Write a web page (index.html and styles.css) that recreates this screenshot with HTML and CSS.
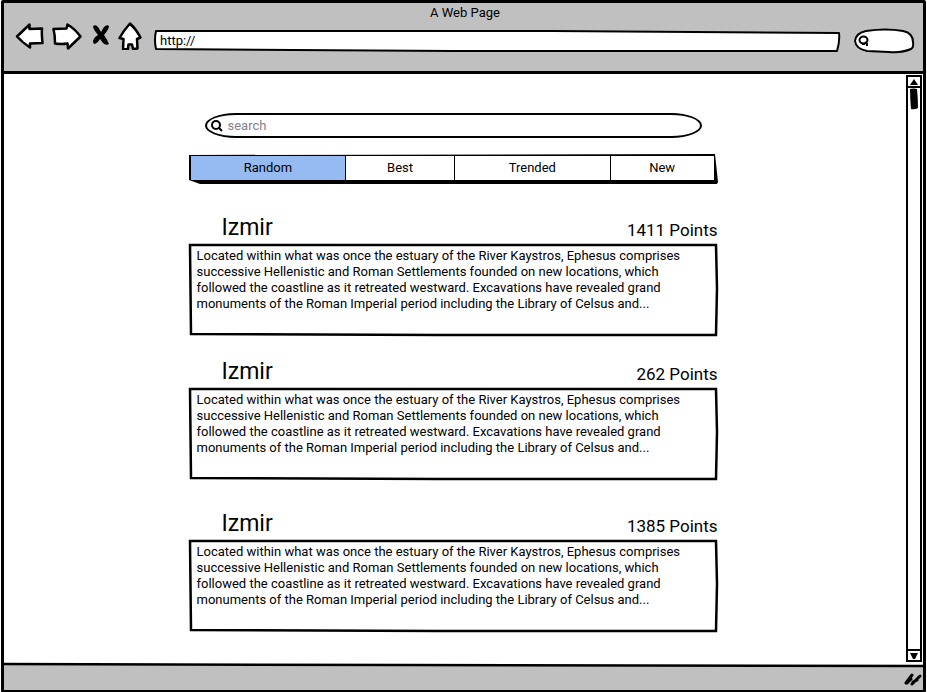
FILE: index.html
```html
<!DOCTYPE html>
<html lang="en">
<head>
<meta charset="utf-8">
<meta name="viewport" content="width=device-width, initial-scale=1">
<title>A Web Page</title>
<link rel="stylesheet" href="styles.css">
</head>
<body>
<div class="window">
  <header class="chrome">
    <h1 class="window-title">A Web Page</h1>
    <div class="toolbar">
      <button class="tool" type="button" aria-label="Back">
        <svg width="29" height="28" viewBox="0 0 29 28"><path class="shape" d="M2 14.5 14.5 2.5V7L27 6.500C26.500 12 27 16 27.500 21L15 21.500V25.500Q8 21 2 14.500Z"/></svg>
      </button>
      <button class="tool" type="button" aria-label="Forward">
        <svg width="30" height="28" viewBox="0 0 30 28"><path class="shape" d="M1.500 7 14.500 6.500 15.500 2.500Q23 7 28.500 14.500L16 26.500 15.500 21.500Q9 22.500 3 21.500Q3 13 1.500 7Z"/></svg>
      </button>
      <button class="tool stop" type="button" aria-label="Stop">
        <svg width="18" height="28" viewBox="0 0 18 28"><path d="M1 4Q4 2 6 5L9 10 12 5Q15 2 17 4Q17 7 12 13Q15 17 17 22Q14 24 11 21L8 17Q6 21 3 22Q1 22 1 19Q2 15 6 13Q1 7 1 4Z"/></svg>
      </button>
      <button class="tool" type="button" aria-label="Home">
        <svg width="24" height="28" viewBox="0 0 24 28"><path class="shape" d="M12 1.500Q18 7 22.500 15.500L19 17 19.500 26.500 15 27 14 22.500H10.500L10 27 5 27.500 5.500 17 1.500 16Q6 8 12 1.500Z"/></svg>
      </button>
      <div class="address">
        <svg class="outline" viewBox="0 0 688 24" preserveAspectRatio="none" aria-hidden="true"><path class="shape thin" d="M3 2 400 2 687 4Q688 12 685 22L300 22 3 20Q1 11 3 2Z"/></svg>
        <input class="address-input" type="text" value="http://" aria-label="Address">
      </div>
      <div class="quick">
        <svg class="outline" viewBox="0 0 61 26" preserveAspectRatio="none" aria-hidden="true"><path class="shape thin" d="M12 3Q32 0 49 3Q59 5 59 14Q60 19 57 21Q48 25 35 24L13 23Q2 21 1 13Q2 5 12 3Z"/></svg>
        <svg class="lens" width="12" height="12" viewBox="0 0 12 12" aria-hidden="true"><ellipse class="line" cx="5.500" cy="5" rx="4" ry="3.500"/><path class="line" d="M4 9H7M7 7 9 9V11"/></svg>
        <input class="quick-input" type="text" aria-label="Web search">
      </div>
    </div>
  </header>

  <div class="viewport">
    <main class="content">
      <label class="search">
        <svg width="12" height="13" viewBox="0 0 12 13" aria-hidden="true"><circle class="line" cx="5" cy="6" r="4"/><path class="line" d="M8 9 11 12"/></svg>
        <input class="search-input" type="text" placeholder="search" aria-label="search">
      </label>

      <nav class="tabs">
        <svg class="outline" viewBox="0 0 528 30" preserveAspectRatio="none" aria-hidden="true"><path d="M0 1 525 0 528 28 527 30H11L0 26Z"/></svg>
        <button class="tab active" type="button">Random</button>
        <button class="tab" type="button">Best</button>
        <button class="tab" type="button">Trended</button>
        <button class="tab" type="button">New</button>
      </nav>

      <article class="entry">
        <div class="entry-head"><h2 class="entry-title">Izmir</h2><span class="points">1411 Points</span></div>
        <div class="card">
          <svg class="outline" viewBox="0 0 529 94" preserveAspectRatio="none" aria-hidden="true"><path class="shape edge" d="M1 2 527 2 528 45 527 92 250 92 2 91Z"/></svg>
          <p class="text">Located within what was once the estuary of the River Kaystros, Ephesus comprises<br>successive Hellenistic and Roman Settlements founded on new locations, which<br>followed the coastline as it retreated westward. Excavations have revealed grand<br>monuments of the Roman Imperial period including the Library of Celsus and...</p>
        </div>
      </article>

      <article class="entry">
        <div class="entry-head"><h2 class="entry-title">Izmir</h2><span class="points">262 Points</span></div>
        <div class="card">
          <svg class="outline" viewBox="0 0 529 94" preserveAspectRatio="none" aria-hidden="true"><path class="shape edge" d="M1 2 527 2 528 45 527 92 250 92 2 91Z"/></svg>
          <p class="text">Located within what was once the estuary of the River Kaystros, Ephesus comprises<br>successive Hellenistic and Roman Settlements founded on new locations, which<br>followed the coastline as it retreated westward. Excavations have revealed grand<br>monuments of the Roman Imperial period including the Library of Celsus and...</p>
        </div>
      </article>

      <article class="entry spaced">
        <div class="entry-head"><h2 class="entry-title">Izmir</h2><span class="points">1385 Points</span></div>
        <div class="card">
          <svg class="outline" viewBox="0 0 529 94" preserveAspectRatio="none" aria-hidden="true"><path class="shape edge" d="M1 2 527 2 528 45 527 92 250 92 2 91Z"/></svg>
          <p class="text">Located within what was once the estuary of the River Kaystros, Ephesus comprises<br>successive Hellenistic and Roman Settlements founded on new locations, which<br>followed the coastline as it retreated westward. Excavations have revealed grand<br>monuments of the Roman Imperial period including the Library of Celsus and...</p>
        </div>
      </article>
    </main>

    <div class="scrollbar">
      <button class="scroll-button" type="button" aria-label="Scroll up"><svg width="8" height="6" viewBox="0 0 8 6"><path d="M0 6 4 0 8 6Z"/></svg></button>
      <div class="track"><svg width="8" height="22" viewBox="0 0 8 22" aria-hidden="true"><path d="M0 1Q4 0 7 1Q8 11 8 20Q5 22 1 21Q0 10 0 1Z"/></svg></div>
      <button class="scroll-button" type="button" aria-label="Scroll down"><svg width="8" height="6" viewBox="0 0 8 6"><path d="M0 0H8L5 6H3Z"/></svg></button>
    </div>
  </div>

  <footer class="status">
    <svg class="rule" viewBox="0 0 920 6" preserveAspectRatio="none" aria-hidden="true"><path class="paper" d="M0 0H920V3L0 1Z"/><path class="shape edge" d="M0 1 400 2 920 3"/></svg>
    <svg class="grip" width="18" height="14" viewBox="0 0 18 14" aria-hidden="true"><path class="stroke" d="M2 11 8 3M8 12 16 4M3 11 7 7M9 10 13 8"/></svg>
  </footer>
</div>
</body>
</html>
```
FILE: styles.css
```css
* { box-sizing: border-box; }

body {
  margin: 0;
  background: #fff;
  color: #000;
  font-family: Roboto, "Open Sans", sans-serif;
  font-size: 13px;
  line-height: 16px;
}

button, input {
  margin: 0;
  padding: 0;
  border: 0;
  background: none;
  color: inherit;
  font: inherit;
}

input:focus { outline: none; }
svg { display: block; }

.shape { fill: #fff; stroke: #000; stroke-width: 2.500; stroke-linejoin: round; }
.thin, .edge { stroke-width: 2; vector-effect: non-scaling-stroke; }
.edge { stroke-width: 2.500; stroke-linejoin: miter; }
.line { fill: none; stroke: #000; stroke-width: 2; }
.stroke { fill: none; stroke: #000; stroke-width: 3; stroke-linecap: round; }
.paper { fill: #fff; }

.outline {
  position: absolute;
  inset: 0;
  width: 100%;
  height: 100%;
  overflow: visible;
}

.window {
  display: flex;
  flex-direction: column;
  min-height: calc(100vh - 1px);
  margin: 0 1px 1px;
  border: 3px solid #000;
  border-radius: 2px;
}

.chrome {
  padding: 1px 8px 21px 11px;
  border-bottom: 3px solid #000;
  background: #c0c0c0;
}

.window-title {
  margin: 0;
  font-size: 13px;
  font-weight: 400;
  line-height: 18px;
  text-align: center;
}

.toolbar {
  display: flex;
  align-items: center;
  height: 28px;
}

.tool { flex: none; margin-right: 8px; }
.stop { margin-left: 2px; }

.address { position: relative; flex: 1; height: 24px; margin: 10px 14px 0 3px; }
.address-input { position: relative; width: 100%; height: 22px; padding: 0 7px; }

.quick {
  position: relative;
  display: flex;
  flex: none;
  align-items: center;
  width: 61px;
  height: 26px;
  margin-top: 10px;
  padding: 0 8px 0 4px;
}
.lens { position: relative; flex: none; }
.quick-input { position: relative; width: 100%; min-width: 0; height: 20px; }

.viewport { display: flex; flex: 1; padding-right: 1px; }

.content {
  flex: 1;
  width: 100%;
  max-width: 529px;
  margin: 0 auto;
  padding: 39px 0 30px;
}

.search {
  display: flex;
  align-items: center;
  gap: 5px;
  height: 25px;
  margin: 0 16px;
  padding: 0 4px;
  border: 2px solid #000;
  border-radius: 32px / 13px;
}
.search-input { flex: 1; min-width: 0; }
.search-input::placeholder { color: #87808a; opacity: 1; }

.tabs {
  position: relative;
  display: grid;
  grid-template-columns: 155fr 108fr 155fr 103fr;
  gap: 1px;
  height: 30px;
  margin: 16px 0 28px;
  padding: 2px 4px 4px 2px;
}
.tab { position: relative; background: #fff; }
.active { background: #95bbf2; }

.entry { margin-bottom: 19px; }
.spaced { margin-top: 27px; margin-bottom: 0; }

.entry-head {
  display: flex;
  align-items: flex-end;
  justify-content: space-between;
  padding-left: 33px;
}
.entry-title { margin: 0; font-size: 23px; font-weight: 400; line-height: 31px; }
.points { font-size: 17px; line-height: 26px; }

.card { position: relative; min-height: 94px; padding: 5px 8px; }
.text { position: relative; margin: 0; }

.scrollbar {
  display: flex;
  flex: none;
  flex-direction: column;
  width: 16px;
  margin: 1px 0 1px 4px;
  border: 2px solid #000;
}
.scroll-button {
  display: flex;
  flex: none;
  align-items: center;
  justify-content: center;
  height: 9px;
}
.track {
  flex: 1;
  padding: 0 2px;
  border: solid #000;
  border-width: 2px 0;
}

.status {
  display: flex;
  flex-direction: column;
  height: 27px;
  background: #c0c0c0;
}
.rule { width: 100%; height: 6px; overflow: visible; }
.grip { align-self: flex-end; margin: 3px 1px 0 0; }
```
